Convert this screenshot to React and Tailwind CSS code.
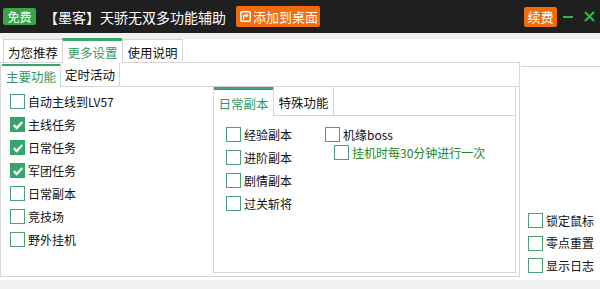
import React from 'react'

const font = "font-['Noto_Sans_CJK_SC',sans-serif]"

function Box({ checked }) {
  if (checked) {
    return (
      <span className="w-[15px] h-[15px] bg-[#36a56c] flex items-center justify-center shrink-0">
        <svg width="12" height="12" viewBox="0 0 12 12">
          <path d="M1.8 6.2 L4.7 9 L10.3 3" stroke="white" strokeWidth="2.3" fill="none" />
        </svg>
      </span>
    )
  }
  return <span className="w-[15px] h-[15px] border border-[#4e9f78] bg-white shrink-0" />
}

function Check({ label, checked, green, h = 'h-[23px]' }) {
  return (
    <div className={`flex items-center gap-[3px] ${h}`}>
      <Box checked={checked} />
      <span className={`text-[12px] leading-none ${green ? 'text-[#23871f]' : 'text-[#111]'}`}>{label}</span>
    </div>
  )
}

export default function App() {
  return (
    <div className={`w-[600px] h-[289px] bg-[#f0f0f0] flex flex-col overflow-hidden ${font}`}>
      {/* title bar */}
      <div className="h-[33px] bg-[#1f1f1f] flex items-center shrink-0">
        <span className="ml-[3px] w-[33px] h-[17px] bg-[#37a54a] rounded-[2px] text-white text-[12px] leading-none flex items-center justify-center">免费</span>
        <span className="ml-[8px] text-white text-[14px] leading-none">【墨客】天骄无双多功能辅助</span>
        <button className="ml-[10px] h-[21px] bg-[#f26c0d] rounded-[2px] flex items-center pl-[4px] pr-[2px] gap-[2px] text-white text-[13px] leading-none">
          <svg width="11" height="11" viewBox="0 0 11 11">
            <rect x="0.75" y="0.75" width="9.5" height="9.5" rx="1" stroke="white" strokeWidth="1.5" fill="none" />
            <path d="M3.5 8.5 V4.5 H7.5" stroke="white" strokeWidth="1.4" fill="none" />
            <path d="M6 3 L7.8 4.5 L6 6" stroke="white" strokeWidth="1.2" fill="none" />
          </svg>
          添加到桌面
        </button>
        <div className="flex-1" />
        <button className="w-[33px] h-[20px] bg-[#f26c0d] rounded-[2px] text-white text-[13px] leading-none flex items-center justify-center">续费</button>
        <span className="ml-[6px] w-[10px] h-[2px] bg-[#3db44b]" />
        <svg className="ml-[11px] mr-[5px]" width="11" height="11" viewBox="0 0 11 11">
          <path d="M1 1 L10 10 M10 1 L1 10" stroke="#3db44b" strokeWidth="2" />
        </svg>
      </div>
      <div className="h-[6px] shrink-0" />

      {/* main white area */}
      <div className="h-[241px] bg-white flex shrink-0">
        {/* left column */}
        <div className="w-[520px] flex flex-col">
          <div className="h-[24px] flex items-end pl-[3px] border-b border-[#d6d6d6]">
            <div className="h-[23px] w-[59px] border-l border-t border-[#d6d6d6] flex items-center justify-center pt-[4px] text-[12.5px] text-[#111]">为您推荐</div>
            <div className="h-[25px] w-[60px] -mb-px bg-white border-t-[3px] border-l border-[#38a66c] border-l-[#d6d6d6] flex items-center justify-center pt-[2px] text-[12.5px] text-[#35965f]">更多设置</div>
            <div className="h-[23px] w-[61px] border-l border-r border-t border-[#d6d6d6] flex items-center justify-center pt-[4px] text-[12.5px] text-[#111]">使用说明</div>
          </div>
          <div className="h-[214px] border-x border-b border-[#d6d6d6] flex flex-col">
            {/* sub tabs */}
            <div className="h-[24px] flex items-end pl-[1px] border-b border-[#d6d6d6] shrink-0">
              <div className="h-[23px] w-[58px] -mb-px bg-white border-t-[2px] border-[#38a66c] flex items-center justify-center pt-[2px] text-[12.5px] text-[#35965f]">主要功能</div>
              <div className="h-[23px] w-[60px] border-l border-r border-[#d6d6d6] flex items-center justify-center pt-[2px] text-[12.5px] text-[#111]">定时活动</div>
            </div>
            <div className="flex flex-1">
              <div className="w-[212px] pl-[9px] pt-[3px] flex flex-col">
                <Check label="自动主线到LV57" />
                <Check label="主线任务" checked />
                <Check label="日常任务" checked />
                <Check label="军团任务" checked />
                <Check label="日常副本" />
                <Check label="竞技场" />
                <Check label="野外挂机" />
              </div>
              <div className="w-[303px] h-[186px] border-x border-b border-[#d6d6d6] flex flex-col">
                <div className="h-[29px] flex shrink-0">
                  <div className="w-[59px] border-t-[3px] border-[#38a66c] flex items-center justify-center pt-[3px] text-[12.5px] text-[#35965f]">日常副本</div>
                  <div className="w-[61px] border-l border-r border-b border-[#d6d6d6] flex items-center justify-center pt-[4px] text-[12.5px] text-[#111]">特殊功能</div>
                  <div className="flex-1 border-b border-[#d6d6d6]" />
                </div>
                <div className="flex pl-[12px] pt-[7px]">
                  <div className="w-[99px] flex flex-col">
                    <Check label="经验副本" />
                    <Check label="进阶副本" />
                    <Check label="剧情副本" />
                    <Check label="过关斩将" />
                  </div>
                  <div className="flex flex-col pt-[2.5px]">
                    <Check label="机缘boss" h="h-[18px]" />
                    <div className="pl-[9px]">
                      <Check label="挂机时每30分钟进行一次" green h="h-[18px]" />
                    </div>
                  </div>
                </div>
              </div>
            </div>
          </div>
        </div>

        {/* right column */}
        <div className="flex-1 flex flex-col">
          <div className="mt-[27px] ml-[1px] border-t border-[#d6d6d6]" />
          <div className="flex-1 flex flex-col justify-end pl-[8px] pb-[3px]">
            <Check label="锁定鼠标" h="h-[22.5px]" />
            <Check label="零点重置" h="h-[22.5px]" />
            <Check label="显示日志" h="h-[22.5px]" />
          </div>
        </div>
      </div>
      <div className="flex-1" />
    </div>
  )
}
